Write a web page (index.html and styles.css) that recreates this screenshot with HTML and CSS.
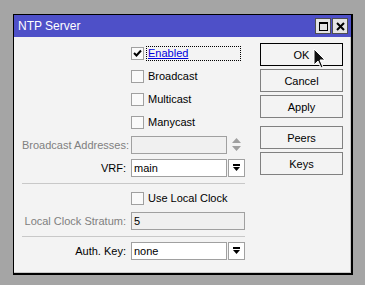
FILE: index.html
```html
<!DOCTYPE html>
<html lang="en">
<head>
  <meta charset="UTF-8">
  <title>NTP Server</title>
  <link rel="stylesheet" href="styles.css">
</head>
<body>
  <div class="window">
    <div class="titlebar">
      <span class="title">NTP Server</span>
      <div class="title-btns">
        <span class="tbtn"><svg width="13" height="13" viewBox="0 0 13 13"><rect x="2.5" y="2.5" width="8" height="8" fill="none" stroke="#000"/><rect x="2" y="2" width="9" height="2" fill="#000"/></svg></span>
        <span class="tbtn"><svg width="13" height="13" viewBox="0 0 13 13"><path d="M3 3 L10 10 M10 3 L3 10" stroke="#000" stroke-width="2"/></svg></span>
      </div>
    </div>
    <div class="content">
      <div class="form">
        <div class="row">
          <span class="lbl"></span>
          <label class="check"><span class="box"><svg width="11" height="11" viewBox="0 0 11 11"><path d="M2 5 L4.5 7.5 L9 2.5" fill="none" stroke="#000" stroke-width="2"/></svg></span><span class="txt focus">Enabled</span></label>
        </div>
        <div class="row">
          <span class="lbl"></span>
          <label class="check"><span class="box"></span><span class="txt">Broadcast</span></label>
        </div>
        <div class="row">
          <span class="lbl"></span>
          <label class="check"><span class="box"></span><span class="txt">Multicast</span></label>
        </div>
        <div class="row">
          <span class="lbl"></span>
          <label class="check"><span class="box"></span><span class="txt">Manycast</span></label>
        </div>
        <div class="row">
          <span class="lbl dim">Broadcast Addresses:</span>
          <div class="field">
            <span class="input off"></span>
            <span class="spin"><svg width="11" height="14" viewBox="0 0 11 14"><path d="M5.5 0 L10 5 L1 5 Z M1 8 L10 8 L5.5 13 Z" fill="#a0a0a0"/></svg></span>
          </div>
        </div>
        <div class="row">
          <span class="lbl">VRF:</span>
          <div class="field">
            <span class="input">main</span>
            <span class="drop"><svg width="9" height="9" viewBox="0 0 9 9"><rect x="1" y="0" width="7" height="2" fill="#000"/><path d="M1 3 L8 3 L4.5 7 Z" fill="#000"/></svg></span>
          </div>
        </div>
        <div class="sep"></div>
        <div class="row">
          <span class="lbl"></span>
          <label class="check"><span class="box"></span><span class="txt">Use Local Clock</span></label>
        </div>
        <div class="row">
          <span class="lbl dim">Local Clock Stratum:</span>
          <span class="input off wide">5</span>
        </div>
        <div class="sep"></div>
        <div class="row">
          <span class="lbl">Auth. Key:</span>
          <div class="field">
            <span class="input">none</span>
            <span class="drop"><svg width="9" height="9" viewBox="0 0 9 9"><rect x="1" y="0" width="7" height="2" fill="#000"/><path d="M1 3 L8 3 L4.5 7 Z" fill="#000"/></svg></span>
          </div>
        </div>
      </div>
      <div class="buttons">
        <button class="btn default">OK</button>
        <button class="btn">Cancel</button>
        <button class="btn">Apply</button>
        <button class="btn gap">Peers</button>
        <button class="btn">Keys</button>
      </div>
    </div>
  </div>
  <svg class="cursor" width="14" height="22" viewBox="0 0 14 22"><path d="M1 1 L1 17 L5 13 L8 20 L10 19 L7 12 L12 12 Z" fill="#111" stroke="#fff" stroke-width="1"/></svg>
</body>
</html>
```

FILE: styles.css
```css
* { box-sizing: border-box; }
body { margin:0; width:365px; height:285px; overflow:hidden; background:#a5a5a5; padding:14px 0 0 13px; font-family:"Liberation Sans", Arial, sans-serif; font-size:11px; color:#000; position:relative; }
.window { width:340px; height:261px; border:1px solid #000; border-right-width:2px; border-bottom-width:2px; background:#f3f3f3; display:flex; flex-direction:column; }
.titlebar { height:22px; background:#4e50c8; display:flex; align-items:center; justify-content:space-between; padding:0 3px 0 4px; }
.title { color:#fff; font-size:12px; }
.title-btns { display:flex; gap:1px; }
.tbtn { width:16px; height:16px; background:#e4e4e4; border:1px solid #505050; display:flex; align-items:center; justify-content:center; }
.content { flex:1; display:flex; padding:0 0 0 8px; border-right:1px solid #c8c8c8; border-bottom:1px solid #c8c8c8; }
.form { width:223px; padding-top:2px; }
.row { display:grid; grid-template-columns:104px 114px; column-gap:5px; height:18px; align-items:center; margin-top:5px; }
.lbl { text-align:right; white-space:nowrap; }
.lbl.dim { color:#808080; }
.check { display:flex; align-items:center; gap:2px; }
.box { width:13px; height:13px; border:1px solid #a0a0a0; background:#fafafa; display:flex; align-items:center; justify-content:center; }
.txt { padding:0 1px; line-height:13px; border:1px dotted transparent; }
.txt.focus { color:#0000e0; text-decoration:underline; border-color:#000; width:95px; }
.field { display:flex; align-items:center; gap:1px; }
.input { width:96px; height:18px; border:1px solid #a0a0a0; background:#fff; padding:0 0 0 2px; line-height:16px; }
.input.off { background:#f0f0f0; }
.input.wide { width:114px; }
.spin { width:17px; display:flex; justify-content:center; }
.drop { width:17px; height:18px; border:1px solid #a0a0a0; background:#fff; display:flex; align-items:center; justify-content:center; }
.sep { height:1px; background:#c8c8c8; margin-top:6px; }
.buttons { margin-left:15px; padding-top:6px; display:flex; flex-direction:column; gap:3px; }
.btn { width:83px; height:23px; border:1px solid #808080; background:#f3f3f3; font:inherit; color:#000; padding:0; }
.btn.default { border-color:#000; }
.btn.gap { margin-top:5px; }
.cursor { position:absolute; left:313px; top:48px; }
```
